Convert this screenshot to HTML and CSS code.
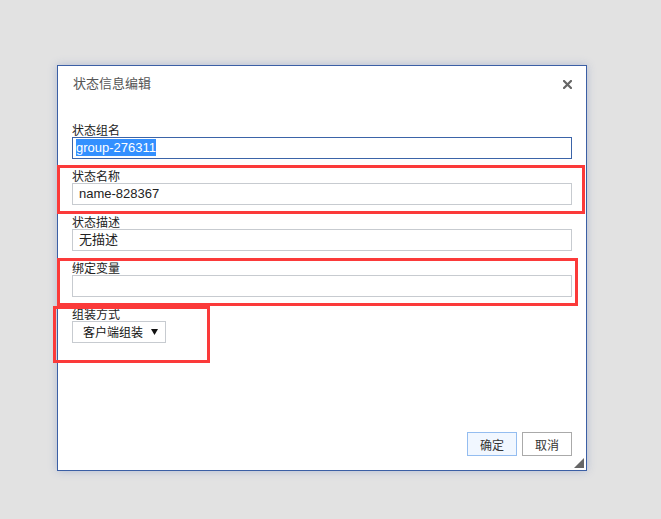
FILE: index.html
```html
<!DOCTYPE html>
<html>
<head>
<meta charset="utf-8">
<link rel="stylesheet" href="styles.css">
</head>
<body>
<div class="dialog">
  <div class="title">状态信息编辑<svg class="close" width="9" height="9" viewBox="0 0 9 9"><path d="M1 1L8 8M8 1L1 8" stroke="#666" stroke-width="2.2" stroke-linecap="square"/></svg></div>
  <div class="form">
    <div class="field">
      <label>状态组名</label>
      <div class="input focus"><span class="sel">group-276311</span></div>
    </div>
    <div class="field">
      <label>状态名称</label>
      <div class="input">name-828367</div>
    </div>
    <div class="field">
      <label>状态描述</label>
      <div class="input">无描述</div>
    </div>
    <div class="field">
      <label>绑定变量</label>
      <div class="input"></div>
    </div>
    <div class="field">
      <label>组装方式</label>
      <div class="select"><span>客户端组装</span><svg class="arrow" width="7" height="6" viewBox="0 0 7 6"><path d="M0 0H7L3.5 6Z" fill="#111"/></svg></div>
    </div>
  </div>
  <div class="footer">
    <button class="btn primary">确定</button>
    <button class="btn">取消</button>
  </div>
  <div class="grip"></div>
</div>
<div class="mark m1"></div>
<div class="mark m2"></div>
<div class="mark m3"></div>
</body>
</html>
```

FILE: styles.css
```css
html, body {
  margin: 0;
  padding: 0;
}
body {
  background: #e2e2e2;
  width: 661px;
  height: 519px;
  padding: 65px 0 0 57px;
  box-sizing: border-box;
  font-family: "Noto Sans CJK SC", "Liberation Sans", sans-serif;
  font-size: 13px;
  color: #222;
  position: relative;
}
.dialog {
  position: relative;
  width: 530px;
  height: 406px;
  box-sizing: border-box;
  background: #fff;
  border: 1px solid #3b5fa5;
  box-shadow: 0 0 8px rgba(120, 140, 190, 0.45);
  display: flex;
  flex-direction: column;
}
.title {
  height: 36px;
  padding: 9px 0 0 15px;
  box-sizing: border-box;
  line-height: 16px;
  color: #555;
  font-size: 13px;
  position: relative;
}
.close {
  position: absolute;
  right: 14px;
  top: 14px;
}
.form {
  margin-top: 21px;
  padding-left: 14px;
  display: flex;
  flex-direction: column;
  gap: 10px;
}
.field label {
  display: block;
  height: 14px;
  line-height: 14px;
  font-size: 12px;
  color: #222;
}
.input {
  width: 500px;
  height: 22px;
  box-sizing: border-box;
  border: 1px solid #c7cbd0;
  padding: 0 6px;
  line-height: 20px;
  font-family: "Liberation Sans", "Noto Sans CJK SC", sans-serif;
  font-size: 13px;
  color: #222;
}
.input.focus {
  border-color: #3b64a8;
  padding-left: 3px;
}
.sel {
  background: #3390ff;
  color: #fff;
  padding: 1px 0;
}
.select {
  width: 94px;
  height: 22px;
  box-sizing: border-box;
  border: 1px solid #c7cbd0;
  padding: 0 7px 0 10px;
  line-height: 20px;
  font-size: 12px;
  display: flex;
  align-items: center;
  justify-content: space-between;
  color: #111;
}
.footer {
  margin-top: auto;
  display: flex;
  justify-content: flex-end;
  gap: 5px;
  padding: 0 14px 14px 0;
}
.btn {
  width: 50px;
  height: 24px;
  box-sizing: border-box;
  background: #fff;
  border: 1px solid #aaa;
  font-family: "Noto Sans CJK SC", sans-serif;
  font-size: 12px;
  color: #333;
  padding: 0;
}
.btn.primary {
  background: #f1f7ff;
  border-color: #94bdf0;
}
.grip {
  position: absolute;
  right: 2px;
  bottom: 2px;
  width: 0;
  height: 0;
  border-left: 10px solid transparent;
  border-bottom: 10px solid #666;
}
.mark {
  position: absolute;
  border: 3px solid #fb3a3a;
  box-sizing: border-box;
}
.m1 { left: 57px; top: 165px; width: 528px; height: 49px; }
.m2 { left: 57px; top: 258px; width: 521px; height: 48px; }
.m3 { left: 53px; top: 306px; width: 157px; height: 57px; }
```
